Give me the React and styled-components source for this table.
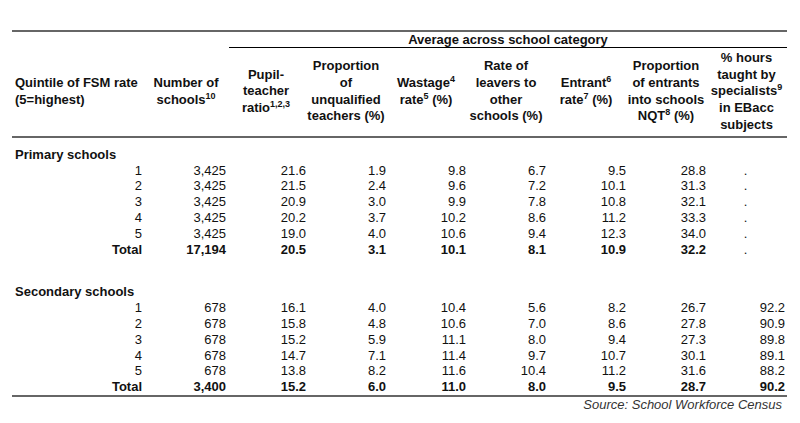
import React from 'react'
import styled, { createGlobalStyle } from 'styled-components'

const GlobalStyle = createGlobalStyle`
  body {
    margin: 0;
    background: #ffffff;
    font-family: "Liberation Sans", Arial, sans-serif;
    color: #111111;
  }
`

const Page = styled.div`
  padding: 30px 0 0 12px;
  width: 775px;
`

const Table = styled.table`
  width: 775px;
  table-layout: fixed;
  border-collapse: separate;
  border-spacing: 0;
  font-size: 13px;
`

const TopCell = styled.th`
  border-top: 2px solid #666666;
  padding: 0;
  height: 15px;
  line-height: 15px;
  font-weight: bold;
  vertical-align: top;
`

const GroupTitle = styled.div`
  margin-left: 3px;
  border-bottom: 1px solid #000000;
  text-align: center;
  line-height: 15px;
`

const HeadCell = styled.th`
  border-bottom: 2px solid #666666;
  padding: 2px 0;
  line-height: 16.7px;
  font-weight: bold;
  white-space: nowrap;
  vertical-align: middle;
  text-align: ${({ left }) => (left ? 'left' : 'center')};
  padding-left: ${({ left }) => (left ? '3px' : '0')};
`

const Sup = styled.sup`
  font-size: 9px;
  line-height: 0;
  vertical-align: 5px;
`

const SectionCell = styled.td`
  padding: 9px 0 0 3px;
  line-height: 16px;
  font-weight: bold;
`

const Spacer = styled.td`
  height: 18px;
  padding: 0;
`

const Row = styled.tr`
  font-weight: ${({ total }) => (total ? 'bold' : 'normal')};
`

const Cell = styled.td`
  padding: 0 ${({ first, last }) => (first ? '4px' : last ? '2px' : '0')} 0 0;
  line-height: 15.8px;
  text-align: ${({ center }) => (center ? 'center' : 'right')};
  font-weight: ${({ center }) => (center ? 'normal' : 'inherit')};
  white-space: nowrap;
  border-bottom: ${({ closing }) => (closing ? '2px solid #666666' : 'none')};
`

const Source = styled.div`
  text-align: right;
  padding-right: 5px;
  font-style: italic;
  font-size: 13px;
  line-height: 15px;
  color: #333333;
`

const primary = [
  ['1', '3,425', '21.6', '1.9', '9.8', '6.7', '9.5', '28.8', '.'],
  ['2', '3,425', '21.5', '2.4', '9.6', '7.2', '10.1', '31.3', '.'],
  ['3', '3,425', '20.9', '3.0', '9.9', '7.8', '10.8', '32.1', '.'],
  ['4', '3,425', '20.2', '3.7', '10.2', '8.6', '11.2', '33.3', '.'],
  ['5', '3,425', '19.0', '4.0', '10.6', '9.4', '12.3', '34.0', '.'],
  ['Total', '17,194', '20.5', '3.1', '10.1', '8.1', '10.9', '32.2', '.'],
]

const secondary = [
  ['1', '678', '16.1', '4.0', '10.4', '5.6', '8.2', '26.7', '92.2'],
  ['2', '678', '15.8', '4.8', '10.6', '7.0', '8.6', '27.8', '90.9'],
  ['3', '678', '15.2', '5.9', '11.1', '8.0', '9.4', '27.3', '89.8'],
  ['4', '678', '14.7', '7.1', '11.4', '9.7', '10.7', '30.1', '89.1'],
  ['5', '678', '13.8', '8.2', '11.6', '10.4', '11.2', '31.6', '88.2'],
  ['Total', '3,400', '15.2', '6.0', '11.0', '8.0', '9.5', '28.7', '90.2'],
]

const DataRows = ({ rows, closing }) =>
  rows.map((row, idx) => {
    const isTotal = idx === rows.length - 1
    return (
      <Row key={idx} total={isTotal}>
        {row.map((value, i) => (
          <Cell
            key={i}
            first={i === 0}
            last={i === row.length - 1}
            center={value === '.'}
            closing={closing && isTotal}
          >
            {value}
          </Cell>
        ))}
      </Row>
    )
  })

const App = () => (
  <Page>
    <GlobalStyle />
    <Table>
      <colgroup>
        <col style={{ width: 134 }} />
        <col style={{ width: 80 }} />
        <col style={{ width: 80 }} />
        <col style={{ width: 80 }} />
        <col style={{ width: 80 }} />
        <col style={{ width: 80 }} />
        <col style={{ width: 80 }} />
        <col style={{ width: 80 }} />
        <col style={{ width: 81 }} />
      </colgroup>
      <thead>
        <tr>
          <TopCell />
          <TopCell />
          <TopCell colSpan={7}>
            <GroupTitle>Average across school category</GroupTitle>
          </TopCell>
        </tr>
        <tr>
          <HeadCell left>Quintile of FSM rate<br />(5=highest)</HeadCell>
          <HeadCell>Number of<br />schools<Sup>10</Sup></HeadCell>
          <HeadCell>Pupil-<br />teacher<br />ratio<Sup>1,2,3</Sup></HeadCell>
          <HeadCell>Proportion<br />of<br />unqualified<br />teachers (%)</HeadCell>
          <HeadCell>Wastage<Sup>4</Sup><br />rate<Sup>5</Sup> (%)</HeadCell>
          <HeadCell>Rate of<br />leavers to<br />other<br />schools (%)</HeadCell>
          <HeadCell>Entrant<Sup>6</Sup><br />rate<Sup>7</Sup> (%)</HeadCell>
          <HeadCell>Proportion<br />of entrants<br />into schools<br />NQT<Sup>8</Sup> (%)</HeadCell>
          <HeadCell>% hours<br />taught by<br />specialists<Sup>9</Sup><br />in EBacc<br />subjects</HeadCell>
        </tr>
      </thead>
      <tbody>
        <tr>
          <SectionCell colSpan={9}>Primary schools</SectionCell>
        </tr>
        <DataRows rows={primary} />
        <tr>
          <Spacer colSpan={9} />
        </tr>
        <tr>
          <SectionCell colSpan={9}>Secondary schools</SectionCell>
        </tr>
        <DataRows rows={secondary} closing />
      </tbody>
    </Table>
    <Source>Source: School Workforce Census</Source>
  </Page>
)

export default App
